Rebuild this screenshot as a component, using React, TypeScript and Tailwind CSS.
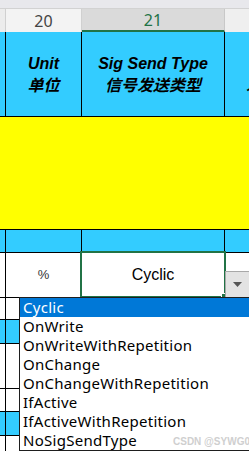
export default function App() {
  const items = [
    "Cyclic",
    "OnWrite",
    "OnWriteWithRepetition",
    "OnChange",
    "OnChangeWithRepetition",
    "IfActive",
    "IfActiveWithRepetition",
    "NoSigSendType",
  ];
  const lowerRows: { h: string; blue: boolean }[] = [
    { h: "h-[22px]", blue: false },
    { h: "h-[24px]", blue: true },
    { h: "h-[45px]", blue: false },
    { h: "h-[23px]", blue: false },
    { h: "h-[24px]", blue: true },
    { h: "h-[45px]", blue: false },
  ];
  return (
    <div className="relative w-[249px] h-[451px] overflow-hidden bg-white font-['Liberation_Sans',Arial,sans-serif]">
      {/* top strip */}
      <div className="h-[9px] bg-[#e8e8ec] border-b border-[#d2d2d2]" />
      {/* column letters */}
      <div className="flex h-[23px] font-['Noto_Sans',sans-serif] text-[16px]">
        <div className="w-[6px] bg-[#ececec] border-r border-[#d0d0d0]" />
        <div className="w-[76px] bg-[#f3f3f3] border-r border-[#d0d0d0] flex items-center justify-center text-[#444]">
          20
        </div>
        <div className="w-[143px] bg-[#dadada] border-b-2 border-[#217346] border-r border-r-[#c8c8c8] flex items-center justify-center text-[#217346]">
          21
        </div>
        <div className="flex-1 bg-[#efefef]" />
      </div>
      {/* header blue row */}
      <div className="flex h-[85px] bg-[#33ccff] border-b border-black font-bold italic text-[16px] leading-[20px] text-black">
        <div className="w-[6px] border-r border-black" />
        <div className="w-[76px] border-r border-black flex flex-col items-center justify-center">
          <span>Unit</span>
          <span className="font-['Noto_Sans_CJK_SC',sans-serif]">单位</span>
        </div>
        <div className="w-[143px] border-r border-black flex flex-col items-center justify-center">
          <span>Sig Send Type</span>
          <span className="font-['Noto_Sans_CJK_SC',sans-serif]">信号发送类型</span>
        </div>
        <div className="flex-1 overflow-hidden flex flex-col justify-center pl-[21px] whitespace-nowrap">
          <span>&nbsp;</span>
          <span className="font-['Noto_Sans_CJK_SC',sans-serif]">发送</span>
        </div>
      </div>
      {/* yellow row */}
      <div className="h-[113px] bg-[#ffff00] border-b border-black" />
      {/* blue row */}
      <div className="flex h-[23px] bg-[#33ccff] border-b border-black">
        <div className="w-[6px] border-r border-black" />
        <div className="w-[76px] border-r border-black" />
        <div className="w-[143px] border-r border-black" />
        <div className="flex-1" />
      </div>
      {/* data row */}
      <div className="flex h-[44px] bg-white">
        <div className="w-[6px] border-r border-black" />
        <div className="w-[76px] border-r border-black flex items-center justify-center text-[13px] text-[#333]">
          %
        </div>
        <div className="w-[143px] border-r border-black flex items-center justify-center text-[16px] text-black">
          Cyclic
        </div>
        <div className="flex-1" />
      </div>
      {/* lower rows */}
      {lowerRows.map((r, i) => (
        <div
          key={i}
          className={`flex ${r.h} border-t border-black ${r.blue ? "bg-[#33ccff]" : "bg-white"}`}
        >
          <div className="w-[6px] border-r border-black" />
          <div className="w-[76px] border-r border-black" />
          <div className="w-[143px] border-r border-black" />
          <div className="flex-1" />
        </div>
      ))}

      {/* selection outline */}
      <div className="absolute left-[80px] top-[251px] w-[146px] h-[47px] border-2 border-[#217346]" />
      <div className="absolute left-[221px] top-[293px] w-[6px] h-[6px] bg-[#217346] border border-white" />

      {/* dropdown button */}
      <div className="absolute left-[225px] top-[271px] w-[27px] h-[27px] bg-[#e3e3e3] border border-[#a8a8a8] flex items-center justify-center pr-[3px]">
        <svg width="9" height="5" viewBox="0 0 9 5">
          <path d="M0 0 L9 0 L4.5 5 Z" fill="#555" />
        </svg>
      </div>

      {/* dropdown list */}
      <div className="absolute left-[19px] top-[297px] w-[240px] h-[154px] bg-white border border-[#1e1e1e] font-['Noto_Sans',sans-serif] text-[15px] tracking-[0.27px] text-black">
        {items.map((it, i) => (
          <div
            key={it}
            className={`h-[19px] leading-[19px] pl-[3px] whitespace-nowrap ${i === 0 ? "bg-[#0078d7] text-white" : ""}`}
          >
            {it}
          </div>
        ))}
      </div>

      {/* watermark */}
      <div className="absolute left-[173px] top-[434px] text-[10px] font-bold text-[#cfcfcf] whitespace-nowrap">
        CSDN @SYWG0
      </div>
    </div>
  );
}
